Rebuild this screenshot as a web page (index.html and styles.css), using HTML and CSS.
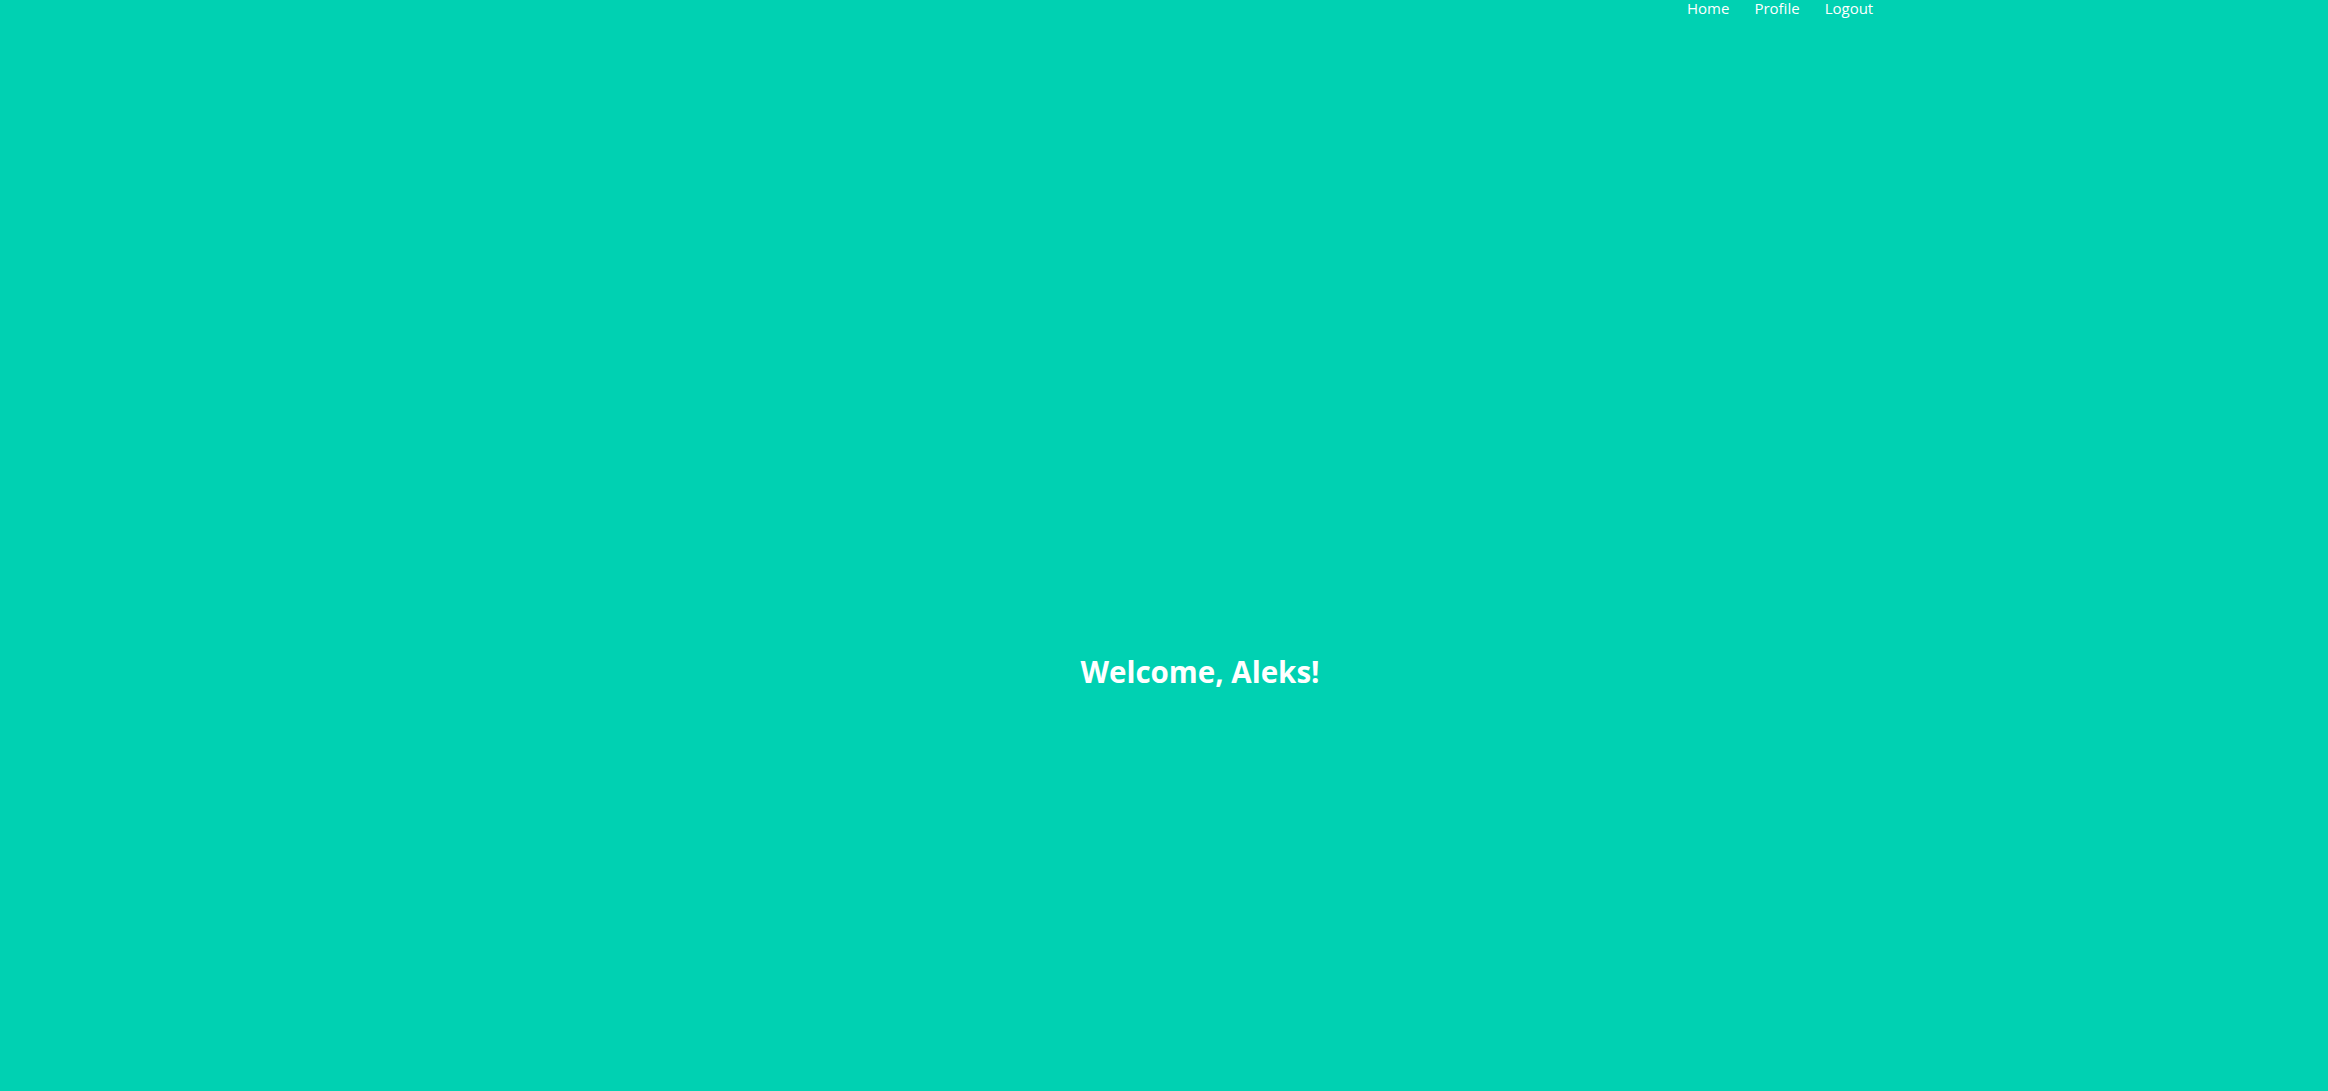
FILE: index.html
```html
<!DOCTYPE html>
<html lang="en">
<head>
<meta charset="utf-8">
<title>Welcome</title>
<link rel="stylesheet" href="styles.css">
</head>
<body>
<div class="page">
  <nav class="nav">
    <a class="nav-link" href="#">Home</a>
    <a class="nav-link" href="#">Profile</a>
    <a class="nav-link" href="#">Logout</a>
  </nav>
  <main class="hero">
    <h1 class="title">Welcome, Aleks!</h1>
  </main>
</div>
</body>
</html>
```
FILE: styles.css
```css
html, body {
  margin: 0;
  padding: 0;
}
body {
  background: #00d1b2;
  font-family: "Open Sans", "Noto Sans", sans-serif;
  color: #fff;
}
.page {
  height: 1091px;
  display: flex;
  flex-direction: column;
}
.nav {
  display: flex;
  gap: 25px;
  padding-left: 1687px;
  height: 18px;
  align-items: flex-start;
}
.nav-link {
  color: #fff;
  text-decoration: none;
  font-size: 15px;
  line-height: 16px;
}
.hero {
  flex: 1;
  display: flex;
  justify-content: center;
  padding-left: 72px;
  padding-top: 634px;
}
.title {
  margin: 0;
  font-size: 29.5px;
  font-weight: 700;
  line-height: 40px;
  color: #fff;
}
```
